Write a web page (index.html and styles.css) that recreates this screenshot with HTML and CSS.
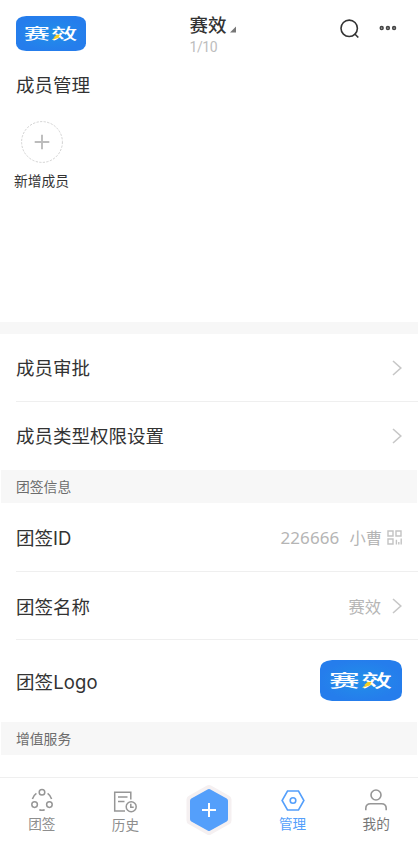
FILE: index.html
```html
<!DOCTYPE html>
<html lang="zh-CN">
<head>
<meta charset="utf-8">
<meta name="viewport" content="width=device-width, initial-scale=1">
<title>成员管理</title>
<link rel="stylesheet" href="styles.css">
</head>
<body>
<div class="app">
  <header class="header">
    <svg class="logo logo-small" viewBox="0 0 82 41">
      <defs>
        <radialGradient id="glow"><stop offset="0" stop-color="#218fe9"/><stop offset="1" stop-color="#257dec"/></radialGradient>
      </defs>
      <path d="M12 0H70Q82 1 82 9V32Q82 40 70 41H12Q0 40 0 32V9Q0 1 12 0Z" fill="url(#glow)"/>
      <text class="logo-text" transform="translate(9 26.5) scale(1.8 1)">赛效</text>
      <path d="M47.5 22H51.5L50 24.5H52.5L42 28L45.5 25.2H44Z" fill="#f4cf23"/>
    </svg>
    <div class="team">
      <div class="team-name">赛效<svg class="caret" viewBox="0 0 7 7"><path d="M7 0V7H0Z" fill="#777"/></svg></div>
      <div class="team-count">1/10</div>
    </div>
    <div class="actions">
      <svg class="search" viewBox="0 0 20 20" fill="none" stroke="#333" stroke-width="1.6"><circle cx="9.2" cy="9.3" r="8.2"/><path d="M14.6 14.8L18.3 18.5"/></svg>
      <svg class="more" viewBox="0 0 18 6" fill="none" stroke="#444" stroke-width="1.6"><circle cx="2.7" cy="3" r="1.4"/><circle cx="8.9" cy="3" r="1.4"/><circle cx="15.1" cy="3" r="1.4"/></svg>
    </div>
  </header>

  <main class="content">
    <section class="members">
      <h1 class="title">成员管理</h1>
      <div class="add">
        <svg class="add-icon" viewBox="0 0 42 42" fill="none"><circle cx="21" cy="21" r="20.4" stroke="#d2d2d2" stroke-dasharray="2.2 1.4"/><path d="M21 13.7V28.3M13.7 21H28.3" stroke="#bcbcbc" stroke-width="1.9"/></svg>
        <span class="add-label">新增成员</span>
      </div>
    </section>

    <div class="row nav-row"><span>成员审批</span><svg class="chevron" viewBox="0 0 10 16"><path d="M1 1L8.8 8L1 15"/></svg></div>
    <div class="row nav-row last"><span>成员类型权限设置</span><svg class="chevron" viewBox="0 0 10 16"><path d="M1 1L8.8 8L1 15"/></svg></div>

    <h2 class="section">团签信息</h2>
    <div class="row id-row">
      <span>团签ID</span>
      <span class="value"><span class="number">226666</span><span class="owner">小曹</span>
        <svg class="qr" viewBox="0 0 15 15" fill="none" stroke="#c3c3c3" stroke-width="1.4"><path d="M1 1H6V6H1ZM9 1H14V6H9ZM1 9H6V14H1ZM9.4 9.8V14.5M14.2 8.5V14.5M11.8 12V14.5"/></svg>
      </span>
    </div>
    <div class="row"><span>团签名称</span><span class="value">赛效<svg class="chevron spaced" viewBox="0 0 10 16"><path d="M1 1L8.8 8L1 15"/></svg></span></div>
    <div class="row tall last"><span class="latin">团签Logo</span>
      <svg class="logo logo-large" viewBox="0 0 82 41">
        <path d="M12 0H70Q82 1 82 9V32Q82 40 70 41H12Q0 40 0 32V9Q0 1 12 0Z" fill="url(#glow)"/>
        <text class="logo-text" transform="translate(9 26.5) scale(1.8 1)">赛效</text>
        <path d="M47.5 22H51.5L50 24.5H52.5L42 28L45.5 25.2H44Z" fill="#f4cf23"/>
      </svg>
    </div>
    <h2 class="section">增值服务</h2>
  </main>

  <nav class="tabs">
    <a class="tab pale"><svg class="icon" viewBox="0 0 24 24" fill="none" stroke="#969696" stroke-width="1.5"><circle cx="12" cy="4.2" r="2.8"/><circle cx="4.6" cy="16.6" r="2.8"/><circle cx="19.4" cy="16.6" r="2.8"/><path d="M6.4 5.4Q3.3 7.6 2.4 11M17.6 5.4Q20.7 7.6 21.6 11M9.3 21.7Q12 22.8 14.7 21.7"/></svg><span>团签</span></a>
    <a class="tab history pale"><svg class="icon" viewBox="0 0 24 24" fill="none" stroke="#969696" stroke-width="1.5"><path d="M17.8 9.5V2.2H1.7V21H12M5 7.1H14.5M5 11.6H11.5"/><circle cx="18.2" cy="16.8" r="5"/><path d="M17.8 13.8V17.2H20.7"/></svg><span>历史</span></a>
    <a class="tab"><svg class="create" viewBox="0 0 46 52"><path d="M21 1.5Q23 .4 25 1.5L43.5 12Q45.5 13.1 45.5 15.5V36.5Q45.5 39 43.5 40L25 50.5Q23 51.6 21 50.5L2.5 40Q.5 39 .5 36.5V15.5Q.5 13.1 2.5 12Z" fill="#f5f0f1"/><path d="M22 5.3Q23 4.7 24 5.3L40.7 14.6Q42 15.3 42 16.7V35.3Q42 36.7 40.7 37.4L24 46.7Q23 47.3 22 46.7L5.3 37.4Q4 36.7 4 35.3V16.7Q4 15.3 5.3 14.6Z" fill="#549ffb"/><path d="M23 19V33M16 26H30" stroke="#fff" stroke-width="2"/></svg></a>
    <a class="tab active"><svg class="icon" viewBox="0 0 24 24" fill="none" stroke="#549ffb" stroke-width="1.6"><path d="M6.5 3H17.5L22.9 12.5L17.5 22H6.5L1.1 12.5Z"/><circle cx="12" cy="12.5" r="2.8"/></svg><span>管理</span></a>
    <a class="tab mine"><svg class="icon" viewBox="0 0 24 24" fill="none" stroke="#969696" stroke-width="1.6"><circle cx="12" cy="7" r="5"/><path d="M1.8 22.2V20.5Q1.8 15.8 6.5 15.8H17.5Q22.2 15.8 22.2 20.5V22.2"/></svg><span>我的</span></a>
  </nav>
</div>
</body>
</html>
```
FILE: styles.css
```css
* { box-sizing: border-box; }
body {
  margin: 0;
  background: #fff;
  color: #333;
  font-family: Inter, "Noto Sans CJK SC", sans-serif;
}
svg { display: block; flex: none; }
.app { display: flex; flex-direction: column; height: 843px; overflow: hidden; }
.header {
  display: grid;
  grid-template-columns: 173.5px 1fr auto;
  align-items: start;
  height: 62px;
  padding: 11px 21px 0 16px;
}
.logo-small { width: 70px; height: 35px; margin-top: 5px; }
.logo-large { width: 82px; height: 41px; }
.logo-text { font: 500 17px "Noto Sans CJK SC", sans-serif; letter-spacing: 1px; fill: #fff; }
.team-name { display: flex; align-items: center; gap: 3px; font-size: 18.5px; line-height: 28px; font-weight: 500; }
.caret { width: 6px; height: 7px; margin-top: 9px; }
.team-count { font: 14px/16px Roboto, sans-serif; color: #bdbdbd; letter-spacing: -.4px; }
.actions { display: flex; align-items: center; gap: 19px; margin-top: 8px; }
.search { width: 20px; height: 20px; }
.more { width: 18px; height: 6px; margin-top: -2px; }
.content { flex: 1; }
.members { height: 272px; border-bottom: 12px solid #f7f7f7; }
.title { margin: 0; padding: 9px 16px 0; font-size: 18.5px; line-height: 28px; font-weight: 400; }
.add { display: flex; flex-direction: column; align-items: center; width: 55px; margin: 22px 0 0 14px; }
.add-icon { width: 42px; height: 42px; }
.add-label { margin-top: 8px; font-size: 13.8px; line-height: 20px; white-space: nowrap; }
.row {
  display: flex;
  align-items: center;
  justify-content: space-between;
  height: 68px;
  margin-left: 16px;
  padding-right: 16px;
  border-bottom: 1px solid #efefef;
  font-size: 18.5px;
}
.nav-row > span { padding-bottom: 2px; }
.id-row { height: 69px; }
.last { border-bottom-color: transparent; }
.tall { height: 82px; }
.latin { padding-top: 1px; letter-spacing: .1px; }
.chevron { width: 10px; height: 16px; fill: none; stroke: #c7c7c7; stroke-width: 1.6; }
.spaced { margin-left: 11px; }
.value { display: flex; align-items: center; font-size: 16.3px; color: #b5b5b5; }
.number { font: 17px "Noto Sans", sans-serif; letter-spacing: .1px; }
.owner { margin-left: 10px; }
.qr { width: 15px; height: 15px; margin-left: 5px; }
.section {
  height: 33px;
  margin: 0 1px;
  padding: 1px 0 0 15px;
  background: #f7f7f7;
  color: #6c6c6c;
  font-size: 13.8px;
  line-height: 33px;
  font-weight: 400;
}
.tabs { display: grid; grid-template-columns: repeat(5, 1fr); height: 66px; border-top: 1px solid #efefef; background: #fff; }
.tab { display: flex; flex-direction: column; align-items: center; padding-top: 10px; font-size: 13.6px; line-height: 20px; color: #777; }
.pale { color: #8e8e8e; }
.tab span { margin-top: 2px; }
.icon { width: 24px; height: 24px; }
.history { padding-top: 12px; }
.history span { margin-top: 1px; }
.create { width: 46px; height: 52px; margin-top: -4px; }
.active { color: #549ffb; }
```
